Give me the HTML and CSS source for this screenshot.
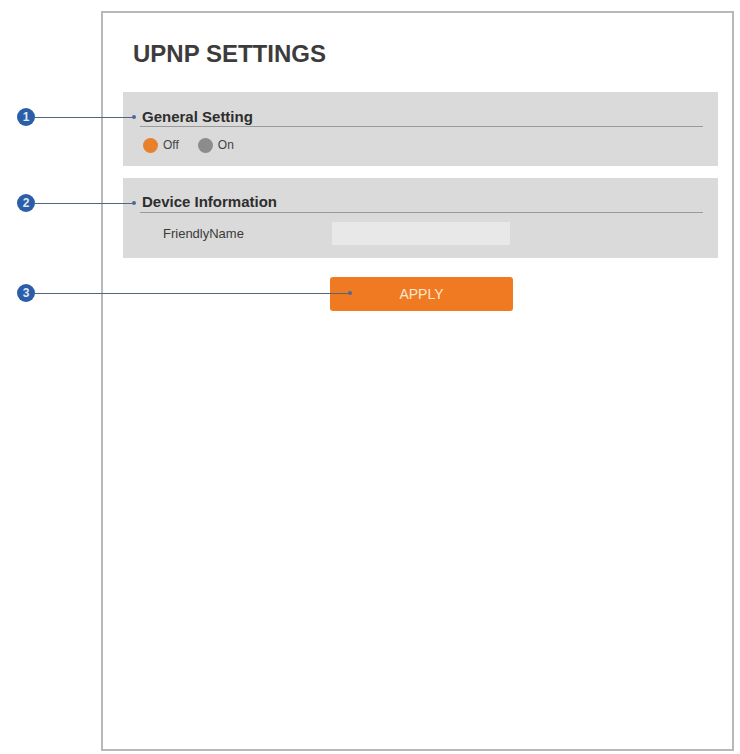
FILE: index.html
```html
<!DOCTYPE html>
<html lang="en">
<head>
    <meta charset="UTF-8">
    <meta name="viewport" content="width=device-width, initial-scale=1.0">
    <title>UPNP Settings</title>
    <link rel="stylesheet" href="styles.css">
</head>
<body>
    <div class="page">
        <div class="frame">
            <h1 class="title">UPNP SETTINGS</h1>

            <div class="section">
                <div class="section-head">General Setting</div>
                <div class="radios">
                    <label class="radio"><span class="dot dot-on"></span>Off</label>
                    <label class="radio"><span class="dot"></span>On</label>
                </div>
            </div>

            <div class="section section-device">
                <div class="section-head">Device Information</div>
                <div class="field">
                    <span class="field-label">FriendlyName</span>
                    <span class="field-input"></span>
                </div>
            </div>

            <div class="actions">
                <button class="apply">APPLY</button>
            </div>
        </div>

        <!-- callout markers -->
        <div class="callout callout-1"><span class="badge">1</span><span class="leader"></span></div>
        <div class="callout callout-2"><span class="badge">2</span><span class="leader"></span></div>
        <div class="callout callout-3"><span class="badge">3</span><span class="leader"></span></div>
    </div>
</body>
</html>
```

FILE: styles.css
```css
:root {
    --frame-border: #b8b8b8;
    --panel-bg: #dadada;
    --text-dark: #3a3a3a;
    --orange: #f07a22;
    --callout-blue: #2b5ea6;
    --leader: #56657a;
}

body {
    margin: 0;
    padding: 0;
    background-color: #fff;
    font-family: "Liberation Sans", Arial, sans-serif;
    color: var(--text-dark);
}

.page {
    position: relative;
    box-sizing: border-box;
    width: 740px;
    height: 754px;
    padding: 11px 0 0 101px;
}

.frame {
    box-sizing: border-box;
    width: 633px;
    height: 740px;
    border: 2px solid var(--frame-border);
    padding: 0 14px 0 20px;
    display: flex;
    flex-direction: column;
}

.title {
    margin: 27px 0 24px 10px;
    font-size: 24px;
    line-height: 28px;
    font-weight: bold;
    color: #3c3c3c;
}

.section {
    background-color: var(--panel-bg);
    padding: 16px 15px 13px 17px;
}

.section-device {
    margin-top: 12px;
    padding-top: 15px;
}

.section-head {
    font-size: 15px;
    line-height: 17px;
    font-weight: bold;
    color: #2e2e2e;
    padding: 0 0 1px 2px;
    border-bottom: 1px solid #9a9a9a;
}

.section-device .section-head {
    padding-bottom: 2px;
}

.radios {
    display: flex;
    gap: 19px;
    margin: 11px 0 0 3px;
}

.radio {
    display: flex;
    align-items: center;
    gap: 5px;
    font-size: 12px;
    line-height: 15px;
    color: #444;
}

.dot {
    width: 15px;
    height: 15px;
    border-radius: 50%;
    background-color: #8c8c8c;
}

.dot-on {
    background-color: #e8812c;
}

.field {
    display: flex;
    align-items: center;
    margin-top: 9px;
    padding-left: 23px;
}

.field-label {
    width: 169px;
    font-size: 13px;
    color: #3a3a3a;
}

.field-input {
    width: 178px;
    height: 23px;
    background-color: #e8e8e8;
}

.actions {
    display: flex;
    justify-content: center;
    margin-top: 19px;
    padding-left: 2px;
}

.apply {
    width: 183px;
    height: 34px;
    border: none;
    border-radius: 3px;
    background-color: var(--orange);
    color: #fde6d2;
    font-family: "Liberation Sans", Arial, sans-serif;
    font-size: 14px;
    cursor: pointer;
}

.callout {
    position: absolute;
    left: 17px;
    display: flex;
    align-items: center;
}

.callout-1 { top: 108px; }
.callout-2 { top: 194px; }
.callout-3 { top: 284px; }

.badge {
    width: 18px;
    height: 18px;
    border-radius: 50%;
    background-color: var(--callout-blue);
    color: #dfe8f5;
    font-size: 12px;
    font-weight: bold;
    line-height: 18px;
    text-align: center;
}

.leader {
    position: relative;
    width: 99px;
    height: 1px;
    background-color: var(--leader);
}

.callout-3 .leader {
    width: 315px;
}

.leader::after {
    content: "";
    position: absolute;
    right: -2px;
    top: -1.5px;
    width: 4px;
    height: 4px;
    border-radius: 50%;
    background-color: #4a6a9e;
}
```
